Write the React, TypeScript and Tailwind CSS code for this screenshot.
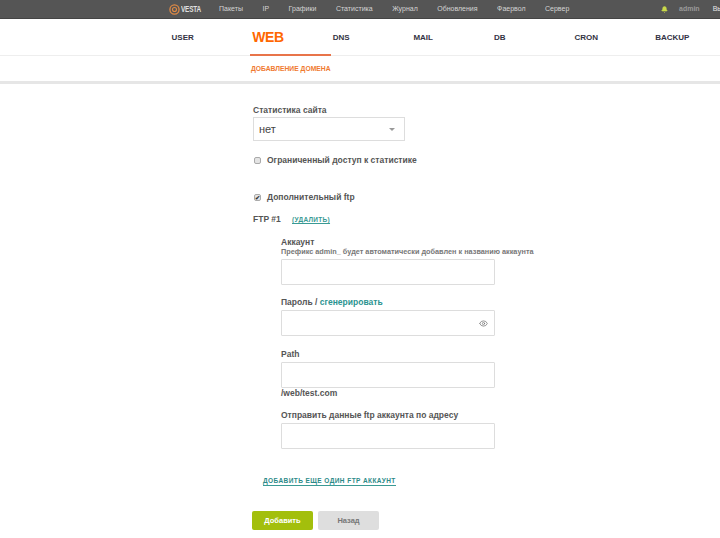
import React from 'react';
import { Bell, Eye } from 'lucide-react';

const topLinks = ['Пакеты', 'IP', 'Графики', 'Статистика', 'Журнал', 'Обновления', 'Фаервол', 'Сервер'];
const tabs = ['USER', 'WEB', 'DNS', 'MAIL', 'DB', 'CRON', 'BACKUP'];

const Field: React.FC<{ className?: string; children?: React.ReactNode }> = ({ className = '', children }) => (
  <div className={`w-[214px] h-[26px] border border-[#dddddd] rounded-[1px] bg-white flex items-center justify-end pr-[6px] ${className}`}>
    {children}
  </div>
);

const App: React.FC = () => {
  return (
    <div className="w-[720px] h-[538px] overflow-hidden bg-white font-['Liberation_Sans',Arial,sans-serif] text-[#555555]">
      {/* top bar */}
      <div className="h-[19px] bg-[#555555] border-b border-[#444444] flex items-center pl-[169px] text-[7px] text-[#d4d4d4] whitespace-nowrap">
        <div className="w-[50px] shrink-0 flex items-center gap-[1px]">
          <svg width="11" height="11" viewBox="0 0 12 12">
            <circle cx="6" cy="6" r="5" fill="none" stroke="#e08a45" strokeWidth="1.4" />
            <circle cx="6" cy="6" r="2.2" fill="none" stroke="#e08a45" strokeWidth="1.2" />
          </svg>
          <span className="text-[8.5px] font-bold text-[#e0e0e0] tracking-[-0.2px] scale-x-75 origin-left">VESTA</span>
        </div>
        <div className="flex gap-[19.5px] w-[442px] shrink-0">
          {topLinks.map((t) => (
            <span key={t}>{t}</span>
          ))}
        </div>
        <Bell size={7} className="shrink-0 text-[#c9d94a] fill-[#c9d94a] mr-[11px]" />
        <span className="text-[#9a9a9a] font-bold mr-[13px]">admin</span>
        <span className="text-[#e6e6e6]">Выход</span>
      </div>

      {/* main tabs */}
      <div className="h-[37px] bg-white border-b border-[#eeeeee] flex pl-[169.6px]">
        {tabs.map((t) =>
          t === 'WEB' ? (
            <div key={t} className="w-[80.6px] shrink-0 h-[37px] border-b-[2px] border-[#e8744a] pl-[2px] pt-[9px] text-[14px] leading-[18px] font-bold tracking-[-0.4px] text-[#ff6701]">
              {t}
            </div>
          ) : (
            <div key={t} className="w-[80.6px] shrink-0 pl-[2px] pt-[13px] text-[8px] leading-[12px] font-bold text-[#333344]">
              {t}
            </div>
          ),
        )}
      </div>

      {/* sub menu */}
      <div className="h-[28px] bg-white border-b-[3px] border-[#e6e6e6] pl-[251px] pt-[8px] text-[6.75px] leading-[10px] font-bold text-[#f07a30]">
        ДОБАВЛЕНИЕ ДОМЕНА
      </div>

      {/* form */}
      <div className="pl-[253px] pt-[21px] text-[8.5px] leading-[11px] font-bold">
        <div>Статистика сайта</div>
        <div className="mt-[1px] w-[152px] h-[24px] border border-[#dddddd] flex items-center justify-between pl-[5px] pr-[9px] text-[11px] font-normal text-[#444444]">
          <span>нет</span>
          <span className="w-0 h-0 border-x-[3.5px] border-x-transparent border-t-[3px] border-t-[#999999]" />
        </div>

        <div className="mt-[14px] flex items-center gap-[6px]">
          <span className="ml-[1px] w-[7px] h-[7px] rounded-[2px] border border-[#aaaaaa] bg-[#e4e4e4]" />
          <span>Ограниченный доступ к статистике</span>
        </div>

        <div className="mt-[26px] flex items-center gap-[6px]">
          <span className="ml-[1px] w-[7px] h-[7px] rounded-[2px] border border-[#aaaaaa] bg-[#e4e4e4] flex items-center justify-center text-[6px] leading-none text-[#333333]">✔</span>
          <span>Дополнительный ftp</span>
        </div>

        <div className="mt-[11px] flex items-center">
          <span className="w-[39px]">FTP #1</span>
          <span className="text-[6.5px] text-[#3a9a94] underline tracking-[0.3px]">(УДАЛИТЬ)</span>
        </div>

        <div className="pl-[28px] mt-[12px]">
          <div className="leading-[10px]">Аккаунт</div>
          <div className="text-[7.3px] leading-[9px] text-[#777777] whitespace-nowrap">Префикс admin_ будет автоматически добавлен к названию аккаунта</div>
          <Field className="mt-[3px]" />

          <div className="mt-[12px]">
            Пароль / <span className="text-[#2c9491]">сгенерировать</span>
          </div>
          <Field className="mt-[2px]">
            <Eye size={9} className="text-[#777777]" />
          </Field>

          <div className="mt-[13px]">Path</div>
          <Field className="mt-[2px]" />
          <div className="leading-[10px]">/web/test.com</div>

          <div className="mt-[12px]">Отправить данные ftp аккаунта по адресу</div>
          <Field className="mt-[2px]" />
        </div>

        <div className="mt-[27px] ml-[10px] w-fit border-b border-[#3a9a94] text-[6.5px] leading-[9px] tracking-[0.43px] text-[#2c8a88]">
          ДОБАВИТЬ ЕЩЕ ОДИН FTP АККАУНТ
        </div>

        <div className="mt-[25px] -ml-[1px] flex gap-[5px]">
          <div className="w-[61px] h-[19px] rounded-[2px] bg-[#a3bf0c] text-white text-[7.5px] flex items-center justify-center">Добавить</div>
          <div className="w-[61px] h-[19px] rounded-[2px] bg-[#dedede] text-[#777777] text-[7.5px] flex items-center justify-center">Назад</div>
        </div>
      </div>
    </div>
  );
};

export default App;
